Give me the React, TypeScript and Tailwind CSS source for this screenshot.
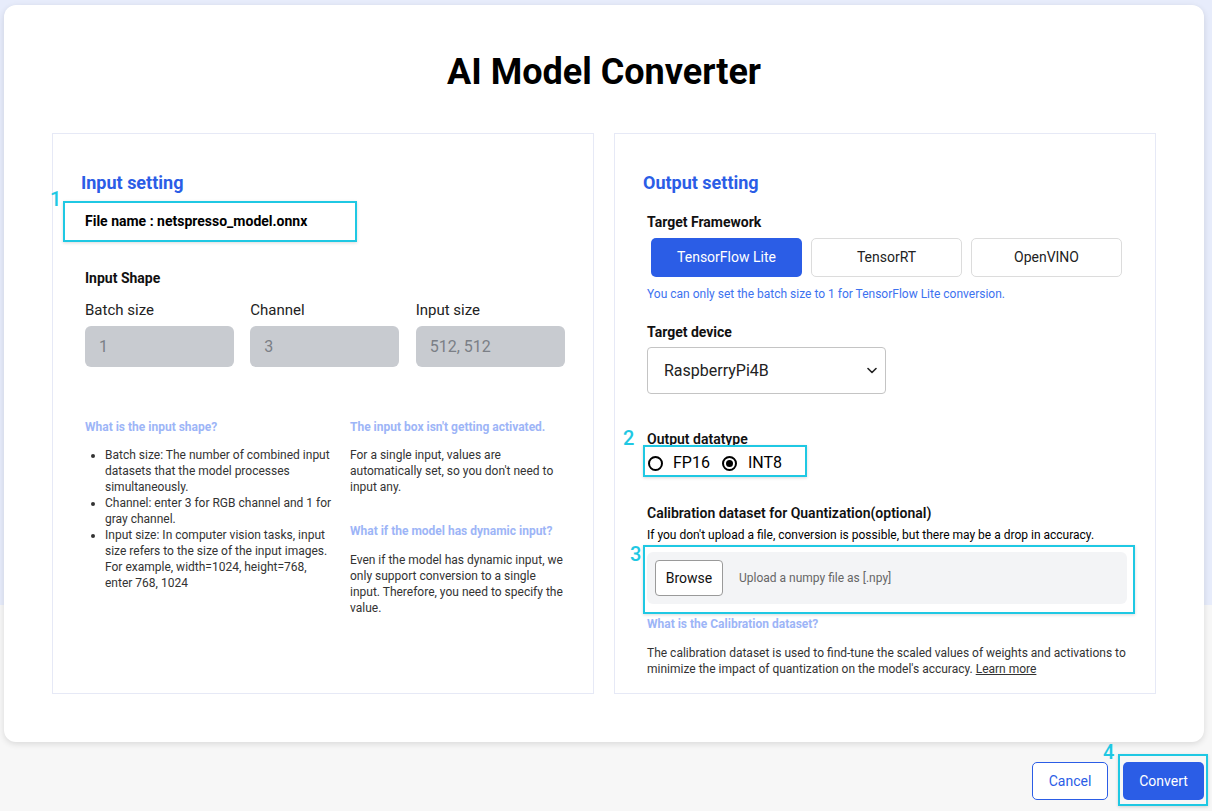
import React from "react";

const CYAN = "border-[#1fc8e3]";

function Num({ n, className }: { n: string; className: string }) {
  return (
    <span className={`absolute text-[20px] leading-[20px] font-medium text-[#1fc8e3] ${className}`}>{n}</span>
  );
}

export default function App() {
  return (
    <div
      className="min-h-[811px] w-[1212px] bg-[linear-gradient(to_bottom,#e7ecfb_605px,#f7f7f7_605px)] pt-[5px] text-[#111]"
      style={{ fontFamily: "Roboto, 'Noto Sans', sans-serif" }}
    >
      {/* Card */}
      <div className="mx-[4px] w-[1200px] rounded-[12px] bg-white px-[48px] pb-[48px] shadow-[0_2px_6px_rgba(0,0,0,0.12)]">
        <h1 className="pt-[47px] pb-[41px] text-center text-[36px] leading-[40px] font-bold text-black">
          AI Model Converter
        </h1>
        <div className="grid grid-cols-2 gap-[20px]">
          {/* Left panel */}
          <div className="border border-[#e6e9f6] pl-[32px] pr-[28px] pt-[37px] pb-[44px]">
            <h2 className="-ml-[4px] text-[18px] leading-[24px] font-bold text-[#2b5de6]">Input setting</h2>
            <div className="relative mt-[6px] flex h-[41px] items-center">
              <span className="text-[14px] font-bold text-black">File name : netspresso_model.onnx</span>
              <div className={`absolute -left-[22px] top-0 h-[41px] w-[294px] border-2 ${CYAN} shadow-[0_1px_3px_rgba(0,0,0,0.15)]`} />
              <Num n="1" className="-left-[35px] -top-[12px]" />
            </div>
            <div className="mt-[26px] text-[14px] leading-[20px] font-bold">Input Shape</div>
            <div className="mt-[12px] grid w-[480px] grid-cols-3 gap-x-[16px]">
              {[
                ["Batch size", "1"],
                ["Channel", "3"],
                ["Input size", "512, 512"],
              ].map(([l, v]) => (
                <div key={l}>
                  <div className="text-[15px] leading-[20px] text-[#222]">{l}</div>
                  <div className="mt-[6px] flex h-[41px] w-[149px] items-center rounded-[6px] bg-[#c8cbd0] pl-[14px] text-[16px] text-[#7b7f86]">
                    {v}
                  </div>
                </div>
              ))}
            </div>
            <div className="mt-[52px] flex gap-[15px] text-[12px] leading-[16px] text-[#333]">
              <div className="w-[250px]">
                <div className="font-bold text-[#9db5f7]">What is the input shape?</div>
                <ul className="mt-[12px] list-disc pl-[20px]">
                  <li>Batch size: The number of combined input datasets that the model processes simultaneously.</li>
                  <li>Channel: enter 3 for RGB channel and 1 for gray channel.</li>
                  <li>Input size: In computer vision tasks, input size refers to the size of the input images. For example, width=1024, height=768, enter 768, 1024</li>
                </ul>
              </div>
              <div className="w-[215px]">
                <div className="font-bold text-[#9db5f7]">The input box isn't getting activated.</div>
                <p className="mt-[12px]">For a single input, values are automatically set, so you don't need to input any.</p>
                <div className="mt-[28px] font-bold text-[#9db5f7]">What if the model has dynamic input?</div>
                <p className="mt-[13px]">
                  Even if the model has dynamic input, we only support conversion to a single input. Therefore, you need to specify the value.
                </p>
              </div>
            </div>
          </div>

          {/* Right panel */}
          <div className="border border-[#e6e9f6] pl-[32px] pr-[28px] pt-[37px] pb-[16px]">
            <h2 className="-ml-[4px] text-[18px] leading-[24px] font-bold text-[#2b5de6]">Output setting</h2>
            <div className="mt-[17px] text-[14px] leading-[20px] font-bold">Target Framework</div>
            <div className="mt-[6px] ml-[4px] flex gap-[9px]">
              <button className="h-[39px] w-[151px] rounded-[5px] bg-[#2b5de6] text-[14px] text-white">TensorFlow Lite</button>
              <button className="h-[39px] w-[151px] rounded-[5px] border border-[#dcdcdc] bg-white text-[14px] text-[#222]">TensorRT</button>
              <button className="h-[39px] w-[151px] rounded-[5px] border border-[#dcdcdc] bg-white text-[14px] text-[#222]">OpenVINO</button>
            </div>
            <div className="mt-[9px] text-[12px] leading-[16px] text-[#3d72ef]">
              You can only set the batch size to 1 for TensorFlow Lite conversion.
            </div>
            <div className="mt-[20px] text-[14px] leading-[20px] font-bold">Target device</div>
            <div className="mt-[5px] flex h-[47px] w-[239px] items-center justify-between rounded-[4px] border border-[#c4c4c4] pl-[16px] pr-[8px] text-[16px] text-[#222]">
              <span>RaspberryPi4B</span>
              <svg width="10" height="7" viewBox="0 0 10 7" fill="none">
                <path d="M1 1.5L5 5.5L9 1.5" stroke="#222" strokeWidth="1.6" strokeLinecap="round" strokeLinejoin="round" />
              </svg>
            </div>
            <div className="relative mt-[35px] text-[14px] leading-[20px] font-semibold">
              Output datatype
              <Num n="2" className="-left-[24px] -top-[1px]" />
            </div>
            <div className="relative mt-[2px] flex h-[24px] items-center text-[16px] text-black">
              <span className="ml-[1px] h-[15px] w-[15px] rounded-full border-2 border-black" />
              <span className="ml-[10px]">FP16</span>
              <span className="ml-[12px] flex h-[15px] w-[15px] items-center justify-center rounded-full border-2 border-black">
                <span className="h-[7px] w-[7px] rounded-full bg-black" />
              </span>
              <span className="ml-[11px]">INT8</span>
              <div className={`absolute -left-[4px] -top-[6px] h-[32px] w-[164px] border-2 ${CYAN} shadow-[0_1px_3px_rgba(0,0,0,0.15)]`} />
            </div>
            <div className="mt-[28px] text-[14px] leading-[20px] font-semibold">
              Calibration dataset for Quantization(optional)
            </div>
            <div className="relative mt-[4px] text-[12px] leading-[16px] text-black">
              If you don't upload a file, conversion is possible, but there may be a drop in accuracy.
            </div>
            <div className="relative mt-[9px] flex h-[52px] w-[480px] items-center rounded-[6px] bg-[#f3f4f6] pl-[8px]">
              <button className="h-[36px] w-[68px] rounded-[4px] border border-[#9a9a9a] bg-white text-[14px] text-[#111]">Browse</button>
              <span className="ml-[16px] text-[12px] text-[#666]">Upload a numpy file as [.npy]</span>
              <div className={`absolute -left-[4px] -top-[7px] h-[69px] w-[492px] border-2 ${CYAN} shadow-[0_1px_3px_rgba(0,0,0,0.15)]`} />
              <Num n="3" className="-left-[17px] -top-[8px]" />
            </div>
            <div className="mt-[12px] text-[12px] leading-[16px] font-bold text-[#9db5f7]">What is the Calibration dataset?</div>
            <p className="mt-[13px] text-[12px] leading-[16px] text-[#333]">
              The calibration dataset is used to find-tune the scaled values of weights and activations to minimize the impact of quantization on the model's accuracy.{" "}
              <span className="underline">Learn more</span>
            </p>
          </div>
        </div>
      </div>

      {/* Footer */}
      <div className="mt-[20px] flex justify-end gap-[15px] pr-[8px]">
        <button className="h-[38px] w-[76px] rounded-[5px] border border-[#2b5de6] bg-white text-[14px] text-[#2b5de6]">Cancel</button>
        <div className="relative">
          <button className="h-[38px] w-[81px] rounded-[5px] bg-[#2b5de6] text-[14px] text-white">Convert</button>
          <div className={`absolute -left-[5px] -top-[8px] h-[52px] w-[90px] border-2 ${CYAN} shadow-[0_1px_3px_rgba(0,0,0,0.15)]`} />
          <Num n="4" className="-left-[20px] -top-[20px]" />
        </div>
      </div>
    </div>
  );
}
